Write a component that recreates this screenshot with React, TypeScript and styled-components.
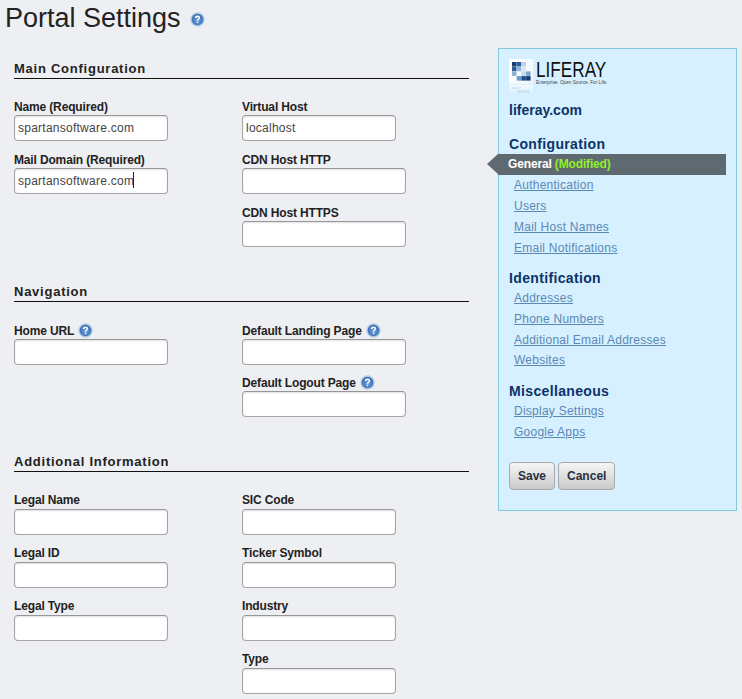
import React from "react";
import styled, { createGlobalStyle } from "styled-components";

const Global = createGlobalStyle`
  html, body {
    margin: 0;
    padding: 0;
    background: #eeeff2;
  }
  body {
    font-family: "Liberation Sans", Arial, sans-serif;
    font-size: 12px;
    color: #222;
  }
  * {
    box-sizing: border-box;
  }
`;

const Page = styled.div`
  width: 742px;
  height: 699px;
  padding-left: 5px;
  overflow: hidden;
`;

const TitleRow = styled.div`
  height: 48px;
  display: flex;
  align-items: flex-start;
`;

const Title = styled.h1`
  margin: 0;
  font-size: 27px;
  line-height: 36px;
  font-weight: normal;
  color: #222;
`;

const TitleHelp = styled.span`
  display: flex;
  margin: 12px 0 0 9px;
`;

const Main = styled.div`
  display: flex;
  align-items: flex-start;
`;

const FormColumn = styled.div`
  width: 464px;
  margin-right: 29px;
  padding: 12px 0 0 9px;
`;

const Section = styled.section`
  margin-bottom: 25px;
`;

const SectionTitle = styled.h3`
  margin: 0;
  height: 19px;
  line-height: 17px;
  font-size: 13px;
  font-weight: bold;
  letter-spacing: 0.75px;
  color: #222;
  border-bottom: 1px solid #111;
`;

const Columns = styled.div<{ $top: number }>`
  display: flex;
  padding-top: ${(p) => p.$top}px;
`;

const Col = styled.div<{ $width: number }>`
  width: ${(p) => p.$width}px;
`;

const Field = styled.div<{ $tight?: boolean }>`
  position: relative;
  margin-bottom: ${(p) => (p.$tight ? 10 : 11)}px;
`;

const Label = styled.label`
  display: flex;
  align-items: center;
  gap: 4px;
  height: 15px;
  margin-bottom: 1px;
  font-size: 12px;
  font-weight: bold;
  letter-spacing: -0.15px;
  color: #222;
`;

// the last block sits its labels one pixel higher over the inputs
const RoomyColumns = styled(Columns)`
  ${Label} {
    margin-bottom: 2px;
  }
  ${Field} {
    margin-bottom: 10px;
  }
`;

const TextInput = styled.input<{ $wide?: boolean }>`
  display: block;
  width: ${(p) => (p.$wide ? 164 : 154)}px;
  height: 26px;
  padding: 0 3px;
  border: 1px solid #a5a5a5;
  border-top-color: #969696;
  border-radius: 4px;
  background: #fff;
  box-shadow: inset 0 1px 2px rgba(0, 0, 0, 0.12);
  font-family: "Liberation Sans", Arial, sans-serif;
  font-size: 12px;
  letter-spacing: 0.25px;
  color: #444;
  outline: none;
`;

const Caret = styled.span`
  position: absolute;
  left: 119px;
  top: 20px;
  width: 1px;
  height: 16px;
  background: #222;
`;

const Sidebar = styled.aside`
  width: 239px;
  height: 463px;
  padding: 10px 10px 0;
  background: #d6f0ff;
  border: 1px solid #83c9dd;
`;

const Logo = styled.div`
  display: flex;
  height: 40px;
`;

const LogoText = styled.div`
  margin-left: 2px;
  color: #111;
`;

const LogoName = styled.div`
  height: 21px;
  padding-top: 1px;
  font-size: 22px;
  line-height: 20px;
  transform: scaleX(0.78);
  transform-origin: left top;
`;

const LogoTagline = styled.div`
  font-size: 4.7px;
  line-height: 5px;
  white-space: nowrap;
  color: #444;
`;

const SiteName = styled.h2`
  margin: 3px 0 0;
  font-size: 14px;
  line-height: 16px;
  font-weight: bold;
  color: #0b3368;
`;

const GroupTitle = styled.h3<{ $top: number }>`
  margin: ${(p) => p.$top}px 0 0;
  font-size: 14px;
  line-height: 16px;
  letter-spacing: 0.35px;
  font-weight: bold;
  color: #0b3368;
`;

const NavList = styled.ul<{ $top?: number }>`
  list-style: none;
  margin: ${(p) => p.$top ?? 0}px 0 0;
  padding: 0;
`;

const NavItem = styled.li<{ $short?: boolean }>`
  height: ${(p) => (p.$short ? 20 : 21)}px;
  padding-left: 5px;
  line-height: 21px;
`;

const NavLink = styled.a`
  font-size: 12px;
  letter-spacing: 0.25px;
  color: #5b88b5;
  text-decoration: underline;
`;

const ActiveItem = styled.div`
  position: relative;
  width: 228px;
  height: 21px;
  margin: 2px 0 0 -11px;
  padding-left: 10px;
  line-height: 20px;
  font-size: 12px;
  font-weight: bold;
  letter-spacing: -0.15px;
  color: #fff;
  background: #5f6a70;

  &::before {
    content: "";
    position: absolute;
    left: -11px;
    top: 0;
    border-style: solid;
    border-width: 10.5px 11px 10.5px 0;
    border-color: transparent #5f6a70 transparent transparent;
  }
`;

const Modified = styled.span`
  color: #92ee2c;
`;

const Buttons = styled.div`
  display: flex;
  gap: 3px;
  margin-top: 19px;
`;

const Button = styled.button`
  height: 28px;
  padding: 0 8px;
  border: 1px solid #a9a9a9;
  border-radius: 4px;
  background: linear-gradient(#f6f6f6, #c9c9c9);
  font-family: "Liberation Sans", Arial, sans-serif;
  font-size: 12px;
  font-weight: bold;
  color: #2a3040;
`;

const HelpIcon = () => (
  <svg width="15" height="15" viewBox="0 0 15 15">
    <defs>
      <radialGradient id="help" cx="50%" cy="55%" r="55%">
        <stop offset="0%" stopColor="#7ba4da" />
        <stop offset="70%" stopColor="#4a7cc0" />
        <stop offset="100%" stopColor="#3a69aa" />
      </radialGradient>
    </defs>
    <circle cx="7.5" cy="7.5" r="7.2" fill="#b0cae6" />
    <circle cx="7.5" cy="7.5" r="5.8" fill="url(#help)" />
    <path
      d="M5.6 6c0-1.2.9-1.8 1.9-1.8s1.9.6 1.9 1.6c0 1.4-1.9 1.4-1.9 2.9"
      fill="none"
      stroke="#fff"
      strokeWidth="1.4"
    />
    <rect x="6.8" y="9.7" width="1.4" height="1.4" fill="#fff" />
  </svg>
);

const tiles: [number, number, string][] = [
  [0, 0, "#153f78"],
  [1, 0, "#2a5c98"],
  [2, 0, "#b7d0ea"],
  [0, 1, "#2a5c98"],
  [1, 1, "#8fb6dd"],
  [2, 1, "#d7e5f3"],
  [0, 2, "#8fb0d4"],
  [2, 2, "#c8dcef"],
  [3, 2, "#7da5cf"],
  [1, 3, "#6d9aca"],
  [2, 3, "#1d4f8a"],
  [3, 3, "#123f73"],
];

const LogoMark = () => (
  <svg width="25" height="37" viewBox="0 0 25 37">
    <defs>
      <linearGradient id="tile" x1="0" y1="0" x2="1" y2="1">
        <stop offset="0%" stopColor="#ffffff" />
        <stop offset="100%" stopColor="#eef5fb" />
      </linearGradient>
      <linearGradient id="fade" x1="0" y1="0" x2="0" y2="1">
        <stop offset="0%" stopColor="#fff" stopOpacity="0.7" />
        <stop offset="100%" stopColor="#fff" stopOpacity="0" />
      </linearGradient>
    </defs>
    <rect x="0" y="0" width="24" height="25" rx="1.5" fill="url(#tile)" />
    <rect x="0" y="26" width="24" height="10" fill="url(#fade)" />
    {tiles.map(([col, row, color]) => (
      <rect
        key={`${col}-${row}`}
        x={3 + col * 4.7}
        y={3 + row * 4.7}
        width="4.5"
        height="4.5"
        fill={color}
      />
    ))}
    <rect x="3" y="28" width="9" height="2" fill="#4d7fb5" opacity="0.15" />
    <rect x="8" y="31" width="13" height="3" fill="#4d7fb5" opacity="0.12" />
  </svg>
);

const App = () => {
  return (
    <Page>
      <Global />
      <TitleRow>
        <Title>Portal Settings</Title>
        <TitleHelp>
          <HelpIcon />
        </TitleHelp>
      </TitleRow>
      <Main>
        <FormColumn>
          <Section>
            <SectionTitle>Main Configuration</SectionTitle>
            <Columns $top={20}>
              <Col $width={228}>
                <Field>
                  <Label>Name (Required)</Label>
                  <TextInput defaultValue="spartansoftware.com" />
                </Field>
                <Field>
                  <Label>Mail Domain (Required)</Label>
                  <TextInput defaultValue="spartansoftware.com" />
                  <Caret />
                </Field>
              </Col>
              <Col $width={170}>
                <Field>
                  <Label>Virtual Host</Label>
                  <TextInput defaultValue="localhost" />
                </Field>
                <Field>
                  <Label>CDN Host HTTP</Label>
                  <TextInput $wide />
                </Field>
                <Field>
                  <Label>CDN Host HTTPS</Label>
                  <TextInput $wide />
                </Field>
              </Col>
            </Columns>
          </Section>

          <Section>
            <SectionTitle>Navigation</SectionTitle>
            <Columns $top={21}>
              <Col $width={228}>
                <Field>
                  <Label>
                    Home URL <HelpIcon />
                  </Label>
                  <TextInput />
                </Field>
              </Col>
              <Col $width={170}>
                <Field $tight>
                  <Label>
                    Default Landing Page <HelpIcon />
                  </Label>
                  <TextInput $wide />
                </Field>
                <Field>
                  <Label>
                    Default Logout Page <HelpIcon />
                  </Label>
                  <TextInput $wide />
                </Field>
              </Col>
            </Columns>
          </Section>

          <Section>
            <SectionTitle>Additional Information</SectionTitle>
            <RoomyColumns $top={20}>
              <Col $width={228}>
                <Field>
                  <Label>Legal Name</Label>
                  <TextInput />
                </Field>
                <Field>
                  <Label>Legal ID</Label>
                  <TextInput />
                </Field>
                <Field>
                  <Label>Legal Type</Label>
                  <TextInput />
                </Field>
              </Col>
              <Col $width={170}>
                <Field>
                  <Label>SIC Code</Label>
                  <TextInput />
                </Field>
                <Field>
                  <Label>Ticker Symbol</Label>
                  <TextInput />
                </Field>
                <Field>
                  <Label>Industry</Label>
                  <TextInput />
                </Field>
                <Field>
                  <Label>Type</Label>
                  <TextInput />
                </Field>
              </Col>
            </RoomyColumns>
          </Section>
        </FormColumn>

        <Sidebar>
          <Logo>
            <LogoMark />
            <LogoText>
              <LogoName>LIFERAY</LogoName>
              <LogoTagline>Enterprise. Open Source. For Life.</LogoTagline>
            </LogoText>
          </Logo>
          <SiteName>liferay.com</SiteName>

          <GroupTitle $top={18}>Configuration</GroupTitle>
          <ActiveItem>
            General <Modified>(Modified)</Modified>
          </ActiveItem>
          <NavList>
            <NavItem><NavLink>Authentication</NavLink></NavItem>
            <NavItem><NavLink>Users</NavLink></NavItem>
            <NavItem><NavLink>Mail Host Names</NavLink></NavItem>
            <NavItem><NavLink>Email Notifications</NavLink></NavItem>
          </NavList>

          <GroupTitle $top={11}>Identification</GroupTitle>
          <NavList $top={2}>
            <NavItem><NavLink>Addresses</NavLink></NavItem>
            <NavItem><NavLink>Phone Numbers</NavLink></NavItem>
            <NavItem $short><NavLink>Additional Email Addresses</NavLink></NavItem>
            <NavItem><NavLink>Websites</NavLink></NavItem>
          </NavList>

          <GroupTitle $top={12}>Miscellaneous</GroupTitle>
          <NavList $top={2}>
            <NavItem><NavLink>Display Settings</NavLink></NavItem>
            <NavItem><NavLink>Google Apps</NavLink></NavItem>
          </NavList>

          <Buttons>
            <Button>Save</Button>
            <Button>Cancel</Button>
          </Buttons>
        </Sidebar>
      </Main>
    </Page>
  );
};

export default App;
